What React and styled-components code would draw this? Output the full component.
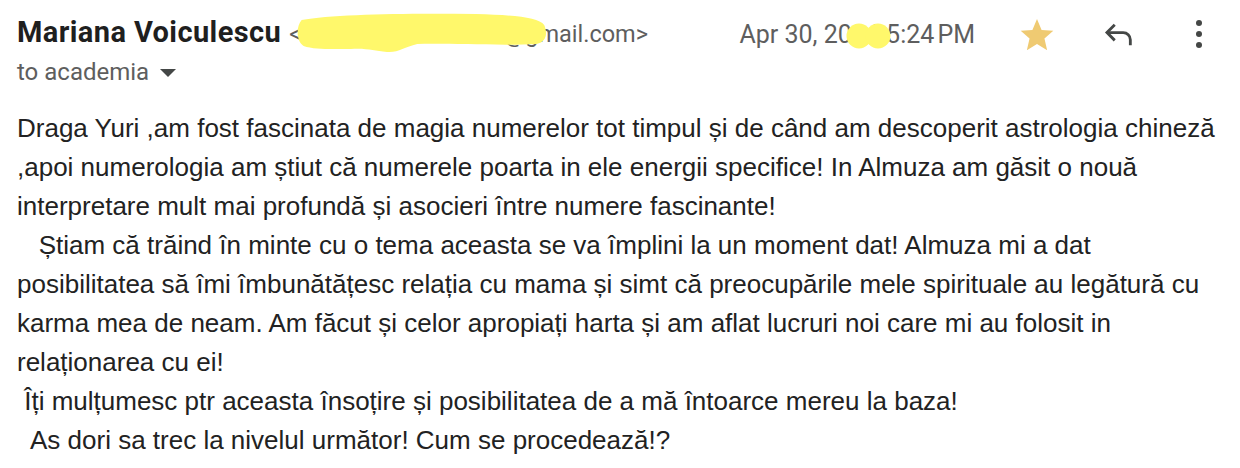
import React from "react";
import styled, {createGlobalStyle} from "styled-components";

const GreyText = "#5e5e5e";
const Highlighter = "#fff86b";

const GlobalStyle = createGlobalStyle`
	body{
		margin: 0;
		background: #ffffff;
	}
`;

const Message = styled.div`
	width: 1240px;
	height: 468px;
	padding: 0 0 0 17px;
	box-sizing: border-box;
	overflow: hidden;
	background: #ffffff;
`;

const Header = styled.div`
	display: flex;
	justify-content: space-between;
	align-items: flex-start;
	height: 96px;
`;

const SenderBlock = styled.div`
	display: flex;
	flex-direction: column;
	padding-top: 15px;
`;

const SenderLine = styled.div`
	display: flex;
	align-items: baseline;
	gap: 8px;
	height: 38px;
`;

const SenderName = styled.span`
	font-family: Roboto, "Liberation Sans", sans-serif;
	font-weight: 700;
	font-size: 29px;
	letter-spacing: 0.4px;
	color: #1f1f1f;
`;

const Email = styled.span`
	position: relative;
	font-family: Roboto, "Liberation Sans", sans-serif;
	font-size: 23.5px;
	color: ${GreyText};
`;

const Scribble = styled.svg`
	position: absolute;			// el marcador amarillo tapa la dirección
	left: ${({$left}) => $left}px;
	top: ${({$top}) => $top}px;
	pointer-events: none;
`;

const Recipients = styled.div`
	display: flex;
	align-items: center;
	gap: 11px;
	margin-top: 5px;
	font-family: Roboto, "Liberation Sans", sans-serif;
	font-size: 24px;
	color: ${GreyText};
`;

const Caret = styled.span`
	width: 0;
	height: 0;
	border-left: 8px solid transparent;
	border-right: 8px solid transparent;
	border-top: 8px solid #444746;
	margin-top: 2px;
`;

const Actions = styled.div`
	display: flex;
	align-items: center;
	padding-top: 14px;
	padding-right: 21px;
`;

const DateText = styled.span`
	position: relative;
	font-family: Roboto, "Liberation Sans", sans-serif;
	font-size: 25px;
	color: ${GreyText};
	margin-right: 42px;
	white-space: pre;
`;

const IconButton = styled.span`
	display: flex;
	align-items: center;
	justify-content: center;
	width: 40px;
	height: 40px;
	margin-left: ${({$gap}) => $gap || 0}px;
`;

const Body = styled.div`
	font-family: "Liberation Sans", Arial, sans-serif;
	font-size: 26px;
	line-height: 39px;
	color: #222222;
	padding-top: 13px;
`;

const Line = styled.div`
	white-space: pre;
`;

const lines = [
	"Draga Yuri ,am fost fascinata de magia numerelor tot timpul și de când am descoperit astrologia chineză",
	",apoi numerologia am știut că numerele poarta in ele energii specifice! In Almuza am găsit o nouă",
	"interpretare mult mai profundă și asocieri între numere fascinante!",
	"   Știam că trăind în minte cu o tema aceasta se va împlini la un moment dat! Almuza mi a dat",
	"posibilitatea să îmi îmbunătățesc relația cu mama și simt că preocupările mele spirituale au legătură cu",
	"karma mea de neam. Am făcut și celor apropiați harta și am aflat lucruri noi care mi au folosit in",
	"relaționarea cu ei!",
	" Îți mulțumesc ptr aceasta însoțire și posibilitatea de a mă întoarce mereu la baza!",
	"  As dori sa trec la nivelul următor! Cum se procedează!?",
];

function StarIcon(){
	return (
		<svg width="38" height="38" viewBox="0 0 24 24">
			<path d="M12 2.5l2.9 6.9 7.4.6-5.6 4.9 1.7 7.3L12 18.3l-6.4 3.9 1.7-7.3L1.7 10l7.4-.6z" fill="#efca72"/>
		</svg>
	);
}

function ReplyIcon(){
	return (
		<svg width="34" height="34" viewBox="0 0 24 24" fill="none" stroke="#444746" strokeWidth="2">
			<path d="M9 5.5L3.5 11 9 16.5"/>
			<path d="M3.5 11H15a5 5 0 0 1 5 5v4"/>
		</svg>
	);
}

function MoreIcon(){
	return (
		<svg width="10" height="30" viewBox="0 0 10 30" fill="#444746">
			<circle cx="5" cy="4" r="3"/>
			<circle cx="5" cy="15" r="3"/>
			<circle cx="5" cy="26" r="3"/>
		</svg>
	);
}

export default function App(){
	return (
		<Message>
			<GlobalStyle/>
			<Header>
				<SenderBlock>
					<SenderLine>
						<SenderName>Mariana Voiculescu</SenderName>
						<Email>
							&lt;voiculescu.mariana@gmail.com&gt;
							<Scribble $left={7} $top={-8} width="252" height="42" viewBox="0 0 266 42" preserveAspectRatio="none">
								<path d="M6 8 C40 2 120 1 190 2 C228 3 256 5 262 13 C266 22 264 30 254 32 C215 34 160 31 128 32 C114 35 108 41 96 40 C82 39 76 36 58 37 C40 37 20 38 8 34 C0 29 0 14 6 8Z" fill={Highlighter}/>
							</Scribble>
						</Email>
					</SenderLine>
					<Recipients>
						to academia
						<Caret/>
					</Recipients>
				</SenderBlock>
				<Actions>
					<DateText>
						{"Apr 30, 2024 5:24\u202FPM"}
						<Scribble $left={107} $top={2} width="46" height="28" viewBox="0 0 46 28">
							<circle cx="13" cy="14" r="12.5" fill={Highlighter}/>
							<circle cx="32" cy="14" r="12.5" fill={Highlighter}/>
						</Scribble>
					</DateText>
					<IconButton><StarIcon/></IconButton>
					<IconButton $gap={42}><ReplyIcon/></IconButton>
					<IconButton $gap={40}><MoreIcon/></IconButton>
				</Actions>
			</Header>
			<Body>
				{lines.map((text, i) => <Line key={i}>{text}</Line>)}
			</Body>
		</Message>
	);
}
